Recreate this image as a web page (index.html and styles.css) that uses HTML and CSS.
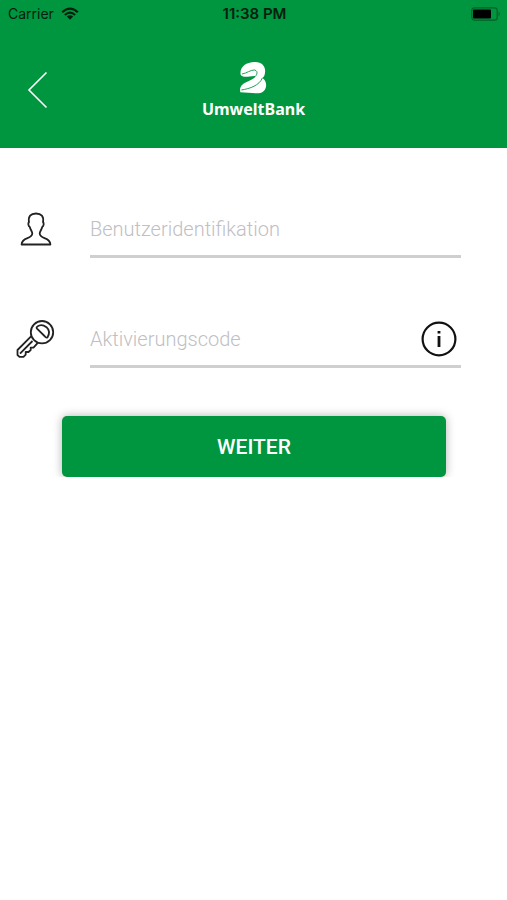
FILE: index.html
```html
<!DOCTYPE html>
<html lang="de">
<head>
<meta charset="utf-8">
<meta name="viewport" content="width=device-width, initial-scale=1">
<title>UmweltBank</title>
<link rel="stylesheet" href="styles.css">
</head>
<body>
<header class="header">
  <div class="status">
    <div class="carrier">
      <span>Carrier</span>
      <svg class="wifi" viewBox="0 0 18 13" aria-hidden="true">
        <path d="M1.2 5.2Q9-2 16.8 5.2M3.9 8Q9 3.4 14.1 8" fill="none" stroke="currentColor" stroke-width="2.2"/>
        <path d="M5.8 9.6Q9 7 12.2 9.6L9 12.8Z" fill="currentColor"/>
      </svg>
    </div>
    <div class="time">11:38 PM</div>
    <svg class="battery" viewBox="0 0 30 14" aria-hidden="true">
      <rect x=".8" y=".8" width="25.4" height="12.4" rx="2.6" fill="none" stroke="#055f29" stroke-width="1.2"/>
      <rect x="2" y="2.4" width="18" height="9.2" rx="1" fill="#000"/>
      <path d="M27.6 4.6Q30 7 27.6 9.4Z" fill="#055f29"/>
    </svg>
  </div>
  <div class="nav">
    <button class="back" type="button" aria-label="Zurück">
      <svg viewBox="0 0 22 38" aria-hidden="true"><path d="M19.5 1.5L2 19L19.5 36.5" fill="none" stroke="#fff" stroke-width="1.6"/></svg>
    </button>
    <div class="brand">
      <svg class="mark" viewBox="0 0 90 108" aria-hidden="true">
        <path d="M8 44C4 22 22 7 50 6C72 5 84 20 81 38C80 46 78 50 73 54C82 59 86 70 84 80C81 94 70 101 54 100L7 97C4 82 10 73 26 66C40 60 50 55 53 48C40 47 26 52 18 50Q10 49 8 44Z" fill="#fff"/>
        <path d="M12 42C26 40 38 29 50 30Q60 33 56 43Q55 46 52 49M10 90C36 86 64 76 73 54" fill="none" stroke="#00963f" stroke-width="2.6"/>
      </svg>
      <span class="wordmark">UmweltBank</span>
    </div>
  </div>
</header>
<main>
  <form class="form">
    <div class="row">
      <label class="icon" for="user" aria-label="Benutzeridentifikation">
        <svg class="person" viewBox="0 0 32 34" aria-hidden="true">
          <path d="M1.6 32.5C1.600 24.500 12.200 27.500 12.300 21.500C12.300 19.500 10.500 18 9.800 15C8 14 8 11 9 10C8 4.500 10.600 1.500 16 1.500S24 4.500 23 10C24 11 24 14 22.200 15C21.500 18 19.700 19.500 19.700 21.500C19.800 27.500 30.400 24.500 30.400 32.500Z" fill="none" stroke="#222" stroke-width="1.8" stroke-linejoin="round"/>
        </svg>
      </label>
      <div class="field"><input id="user" type="text" placeholder="Benutzeridentifikation"></div>
    </div>
    <div class="row">
      <label class="icon" for="code" aria-label="Aktivierungscode">
        <svg class="key" viewBox="0 0 40 40" aria-hidden="true">
          <g fill="none" stroke="#222" stroke-width="1.8" stroke-linejoin="round">
            <circle cx="26" cy="13.200" r="11.200"/>
            <path d="M21.500 7.400Q25.500 4.400 30.500 8.200Q35 12.400 31.500 18.400Q30 19 28.500 17L21 9.600Q20 8.400 21.500 7.400Z"/>
            <path d="M15.300 17.200L1.500 31V36L3.500 37.800H7.500L9.700 35.600V33H12.500L14.700 31V28.600H17.500L22 23.600M4 34.600L16.500 22"/>
          </g>
        </svg>
      </label>
      <div class="field">
        <input id="code" type="text" placeholder="Aktivierungscode">
        <button class="info" type="button" aria-label="Information">
          <svg viewBox="0 0 36 36" aria-hidden="true">
            <circle cx="18" cy="18" r="16.400" fill="none" stroke="#111" stroke-width="2.200"/>
            <path d="M16.600 10h2.800v2.600h-2.800zM16.600 15h2.800v11h-2.800z" fill="#111"/>
          </svg>
        </button>
      </div>
    </div>
    <button class="submit" type="submit">WEITER</button>
  </form>
</main>
</body>
</html>
```
FILE: styles.css
```css
* {
  box-sizing: border-box;
}

body {
  margin: 0;
  background: #fff;
  font-family: Roboto, "Liberation Sans", sans-serif;
}

button {
  border: 0;
  padding: 0;
  background: none;
  font: inherit;
}

svg {
  display: block;
}

.header {
  background: #00963f;
  padding-bottom: 29px;
}

.status {
  display: grid;
  grid-template-columns: 1fr auto 1fr;
  align-items: center;
  height: 27px;
  padding: 0 6px 0 8px;
  color: #03200d;
  font-family: Inter, "Liberation Sans", sans-serif;
  font-size: 14px;
}

.carrier {
  display: flex;
  align-items: center;
  gap: 7px;
}

.wifi {
  width: 18px;
  height: 13px;
}

.time {
  font-size: 15px;
  font-weight: 600;
}

.battery {
  width: 30px;
  height: 14px;
  justify-self: end;
}

.nav {
  display: grid;
  grid-template-columns: 1fr auto 1fr;
  align-items: center;
  padding: 33px 27px 0;
}

.back {
  justify-self: start;
}

.back svg {
  width: 22px;
  height: 38px;
}

.brand {
  display: flex;
  flex-direction: column;
  align-items: center;
  gap: 3px;
}

.mark {
  width: 30px;
  height: 36px;
}

.wordmark {
  color: #fff;
  font-family: "Noto Sans", sans-serif;
  font-size: 16px;
  font-weight: 700;
  line-height: 20px;
}

.form {
  display: flex;
  flex-direction: column;
  gap: 52px;
  padding-top: 52px;
}

.row {
  display: flex;
  align-items: center;
  padding-right: 46px;
}

.icon {
  display: flex;
  flex: none;
  justify-content: center;
  width: 90px;
  padding-right: 19px;
}

.person {
  width: 32px;
  height: 34px;
}

.key {
  width: 40px;
  height: 40px;
}

.field {
  display: flex;
  flex: 1;
  align-items: center;
  height: 58px;
  padding: 2px 4px 0 0;
  border-bottom: 3px solid #cfcfd1;
}

.field input {
  flex: 1;
  min-width: 0;
  border: 0;
  outline: 0;
  padding: 0;
  background: none;
  color: #222;
  font: inherit;
  font-size: 20px;
  font-weight: 300;
}

.field input::placeholder {
  color: #c0c0c3;
  opacity: 1;
}

.info svg {
  width: 36px;
  height: 36px;
}

.submit {
  height: 61px;
  margin: -4px 61px 0 62px;
  border-radius: 5px;
  background: #00963f;
  box-shadow: 0 0 10px rgba(0, 0, 0, 0.3);
  color: #fff;
  font-size: 21px;
  font-weight: 500;
}
```
